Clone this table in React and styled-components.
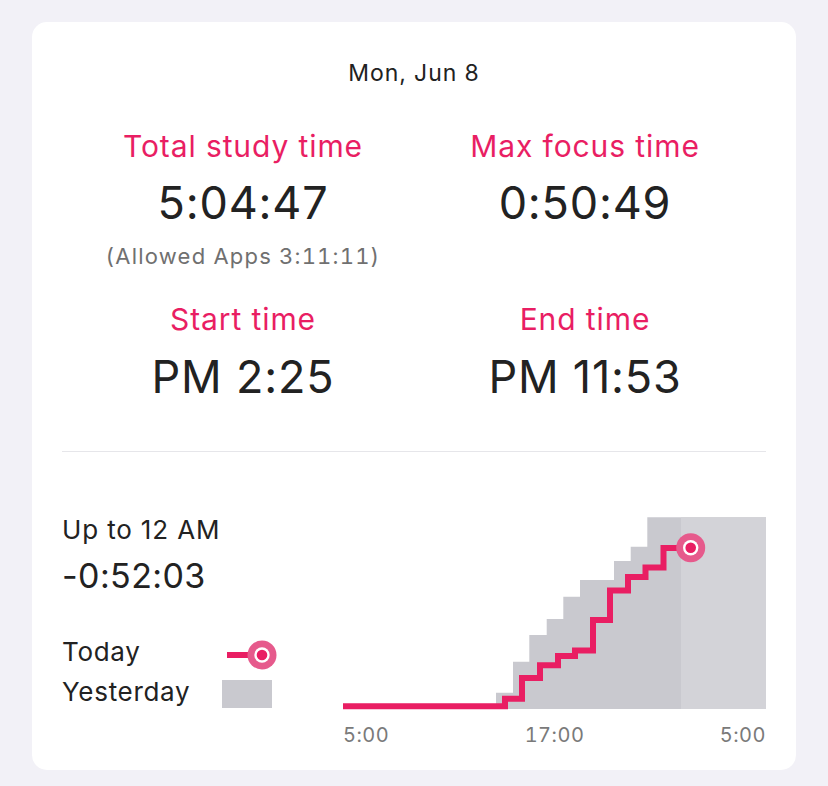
import React from "react";
import styled, { createGlobalStyle } from "styled-components";

const Global = createGlobalStyle`
  html, body { margin: 0; padding: 0; background: #f2f1f7; }
  body {
    font-family: Inter, "Noto Sans", sans-serif;
    color: #222;
  }
`;

const PINK = "#e91e63";
const GRAY = "#c9c9cf";
const LIGHT = "#d3d3d8";

const Page = styled.div`
  padding: 22px 32px 16px 32px;
`;

const Card = styled.div`
  background: #fff;
  border-radius: 15px;
  padding: 37px 30px 23px 30px;
  width: 764px;
  box-sizing: border-box;
`;

const Title = styled.div`
  text-align: center;
  font-size: 23px;
  line-height: 28px;
  letter-spacing: 0.9px;
  color: #222;
`;

const StatGrid = styled.div`
  margin-top: 41px;
  padding: 0 10px;
  display: grid;
  grid-template-columns: 1fr 1fr;
  row-gap: 31px;
`;

const Stat = styled.div`
  display: flex;
  flex-direction: column;
  align-items: center;
`;

const Label = styled.div`
  color: ${PINK};
  font-size: 30px;
  line-height: 36px;
  letter-spacing: 0.9px;
`;

const Value = styled.div`
  margin-top: ${(p) => p.$gap || 12}px;
  font-size: 45px;
  line-height: 54px;
  letter-spacing: 0.8px;
  color: #222;
`;

const Sub = styled.div`
  margin-top: 12px;
  font-size: 22px;
  line-height: 28px;
  letter-spacing: 1.2px;
  font-variant-numeric: tabular-nums;
  color: #707070;
`;

const Divider = styled.div`
  margin-top: 47px;
  height: 1px;
  background: #e6e6ea;
`;

const Bottom = styled.div`
  display: flex;
  justify-content: space-between;
  align-items: flex-start;
  padding-top: 58px;
`;

const Info = styled.div`
  padding-top: 5px;
  display: flex;
  flex-direction: column;
`;

const InfoLabel = styled.div`
  font-size: 26px;
  line-height: 30px;
  letter-spacing: 0.85px;
  color: #222;
`;

const InfoValue = styled.div`
  margin-top: 11px;
  font-size: 34px;
  line-height: 40px;
  letter-spacing: 0.4px;
  color: #222;
`;

const Legend = styled.div`
  margin-top: 36px;
  display: grid;
  grid-template-columns: 160px 55px;
  grid-auto-rows: 40px;
  align-items: center;
`;

const LegendText = styled.div`
  font-size: 26px;
  line-height: 30px;
  letter-spacing: 0.7px;
  color: #222;
`;

const LegendIcon = styled.div`
  display: flex;
  align-items: center;
  margin-top: ${(p) => p.$offset || 0}px;
`;

const Swatch = styled.div`
  width: 50px;
  height: 28px;
  background: ${GRAY};
`;

const Chart = styled.div`
  width: 423px;
  display: flex;
  flex-direction: column;
`;

const Plot = styled.svg`
  display: block;
  overflow: visible;
`;

const Axis = styled.div`
  margin-top: 13px;
  display: flex;
  justify-content: space-between;
  font-size: 20px;
  line-height: 24px;
  letter-spacing: 0.5px;
  font-variant-numeric: tabular-nums;
  color: #7a7a7a;
`;

const Dot = ({ cx, cy }) => (
  <>
    <circle cx={cx} cy={cy} r={14.5} fill="#e65a8c" />
    <circle cx={cx} cy={cy} r={7.7} fill="#fff" />
    <circle cx={cx} cy={cy} r={5.3} fill={PINK} />
  </>
);

const yesterday = [
  [153, 199], [153, 182.7], [170, 182.7], [170, 151.7], [186.3, 151.7],
  [186.3, 125], [203.7, 125], [203.7, 109], [220.3, 109], [220.3, 86.7],
  [237, 86.7], [237, 70], [271, 70], [271, 51], [287.7, 51], [287.7, 36.7],
  [304.3, 36.7], [304.3, 7.3], [423, 7.3], [423, 199],
];

const todayPath =
  "M0 196.3 H162 V188.7 H179 V168 H197 V155.3 H215 V146 H232 V140.5 H250 V110 H267 V80.5 H285 V67 H302.5 V57.5 H320.5 V38 H347";

export default function App() {
  return (
    <Page>
      <Global />
      <Card>
        <Title>Mon, Jun 8</Title>
        <StatGrid>
          <Stat>
            <Label>Total study time</Label>
            <Value>5:04:47</Value>
            <Sub>(Allowed Apps 3:11:11)</Sub>
          </Stat>
          <Stat>
            <Label>Max focus time</Label>
            <Value>0:50:49</Value>
          </Stat>
          <Stat>
            <Label>Start time</Label>
            <Value $gap={13}>PM 2:25</Value>
          </Stat>
          <Stat>
            <Label>End time</Label>
            <Value $gap={13}>PM 11:53</Value>
          </Stat>
        </StatGrid>
        <Divider />
        <Bottom>
          <Info>
            <InfoLabel>Up to 12 AM</InfoLabel>
            <InfoValue>-0:52:03</InfoValue>
            <Legend>
              <LegendText>Today</LegendText>
              <LegendIcon $offset={5}>
                <svg width="55" height="30" viewBox="0 0 55 30" style={{ overflow: "visible" }}>
                  <line x1="5" y1="15" x2="40" y2="15" stroke={PINK} strokeWidth="6" />
                  <Dot cx={40} cy={15} />
                </svg>
              </LegendIcon>
              <LegendText>Yesterday</LegendText>
              <LegendIcon $offset={3}>
                <Swatch />
              </LegendIcon>
            </Legend>
          </Info>
          <Chart>
            <Plot width="423" height="200" viewBox="0 0 423 200">
              <polygon points={yesterday.map((p) => p.join(",")).join(" ")} fill={GRAY} />
              <rect x="338" y="7.3" width="85" height="191.7" fill={LIGHT} />
              <path d={todayPath} fill="none" stroke={PINK} strokeWidth="6" strokeLinejoin="miter" />
              <Dot cx={347.7} cy={37.7} />
            </Plot>
            <Axis>
              <span>5:00</span>
              <span>17:00</span>
              <span>5:00</span>
            </Axis>
          </Chart>
        </Bottom>
      </Card>
    </Page>
  );
}
